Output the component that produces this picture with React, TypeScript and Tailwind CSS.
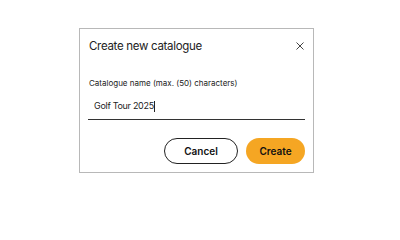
import React from 'react'

export default function App() {
  return (
    <div className="w-[400px] h-[201px] bg-white pt-[28px] pl-[79px]" style={{ fontFamily: 'Inter, "Noto Sans", sans-serif' }}>
      <div className="w-[235px] h-[145px] border border-[#b8b8b8] bg-white flex flex-col px-[8px]">
        <div className="flex items-center justify-between h-[36px] pl-[1px]">
          <span className="text-[11.5px] text-[#222] tracking-[-0.3px]">Create new catalogue</span>
          <svg width="8" height="8" viewBox="0 0 8 8" className="mr-[1px] -mt-[2px]">
            <path d="M0.5 0.5 L7.5 7.5 M7.5 0.5 L0.5 7.5" stroke="#444" strokeWidth="1" />
          </svg>
        </div>
        <div className="mt-[12px] pl-[1px] text-[8px] text-[#222]">Catalogue name (max. (50) characters)</div>
        <div className="mt-[6px] h-[25px] border-b border-[#333] flex items-center pl-[6px] pb-[2px]">
          <span className="text-[9px] text-[#222] tracking-[-0.3px]">Golf Tour 2025</span>
          <span className="w-px h-[11px] bg-[#222]" />
        </div>
        <div className="mt-[18px] flex justify-end gap-[8px]">
          <button className="w-[74px] h-[26px] rounded-full border border-[#222] text-[10px] font-semibold text-[#111]">Cancel</button>
          <button className="w-[59px] h-[26px] rounded-full bg-[#f5a623] text-[10px] font-semibold text-[#111]">Create</button>
        </div>
      </div>
    </div>
  )
}
